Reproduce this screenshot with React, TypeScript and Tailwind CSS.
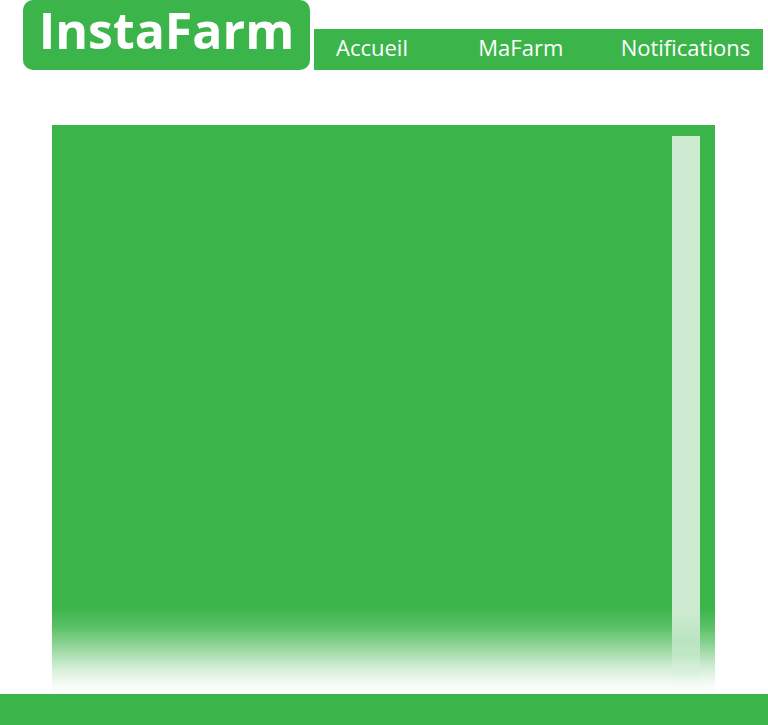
export default function App() {
  return (
    <div className="flex min-h-screen flex-col bg-white font-['Open_Sans',sans-serif] text-white">
      <header className="flex items-end gap-1 pr-[5px] pl-[23px]">
        <h1 className="flex h-[70px] w-[287px] shrink-0 justify-center rounded-[10px] bg-[#3bb54a] text-[50px] leading-[60px] font-bold">
          <a href="#">InstaFarm</a>
        </h1>
        <nav className="grid h-[41px] flex-1 grid-cols-3 bg-[#3bb54a] pl-[22px] text-[22px] leading-9">
          <a href="#accueil">Accueil</a>
          <a href="#mafarm">MaFarm</a>
          <a href="#notifications">Notifications</a>
        </nav>
      </header>
      <main className="relative mt-[55px] mr-[53px] ml-[52px] flex flex-1 justify-end bg-[#3bb54a] pt-[11px] pr-[15px]">
        <div className="absolute inset-x-0 bottom-0 h-[88px] bg-[linear-gradient(to_bottom,rgb(255_255_255/0)_2px,rgb(255_255_255/0.15)_20px,rgb(255_255_255/0.36)_35px,rgb(255_255_255/0.66)_54px,rgb(255_255_255/0.81)_65px,rgb(255_255_255/0.93)_76px,white_87px)]" />
        <div className="relative mb-3 flex w-7 flex-col">
          <div className="flex-1 bg-[#ceebd2]" />
          <div className="h-[76px] bg-[linear-gradient(to_bottom,#ceebd2_4px,#bae5c0_36px,#c1e8c6_50px,#d8f0db_62px,rgb(240_250_241/0)_76px)]" />
        </div>
      </main>
      <footer className="h-[31px] bg-[#3bb54a]" />
    </div>
  );
}
